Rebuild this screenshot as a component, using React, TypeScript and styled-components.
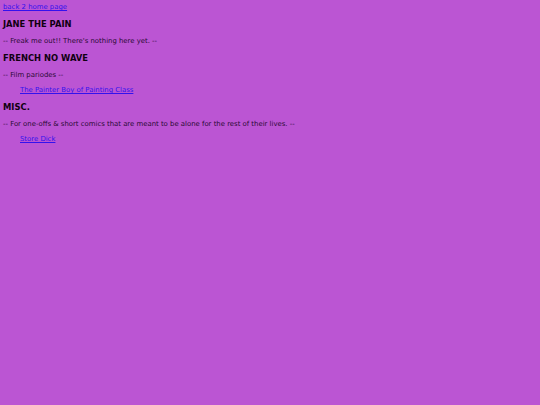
import React from "react";
import styled, { createGlobalStyle } from "styled-components";

const Global = createGlobalStyle`
  html, body { margin: 0; padding: 0; }
  body {
    background: #bb55d3;
    font-family: "DejaVu Sans", Verdana, sans-serif;
    color: #2a0a33;
    min-height: 405px;
  }
`;

const Page = styled.div`
  padding: 2px 3px;
  font-size: 6.9px;
  line-height: 10px;
`;

const Link = styled.a`
  color: #3311ee;
  text-decoration: underline;
`;

const Heading = styled.h2`
  font-size: 8.4px;
  line-height: 10px;
  font-weight: bold;
  color: #110011;
  margin: 7px 0;
`;

const Note = styled.p`
  margin: 7px 0 5px;
`;

const List = styled.ul`
  list-style: none;
  margin: 0;
  padding-left: 17px;
`;

export default function App() {
  return (
    <Page>
      <Global />
      <Link href="#">back 2 home page</Link>
      <Heading>JANE THE PAIN</Heading>
      <Note>-- Freak me out!! There's nothing here yet. --</Note>
      <Heading>FRENCH NO WAVE</Heading>
      <Note>-- Film pariodes --</Note>
      <List>
        <li><Link href="#">The Painter Boy of Painting Class</Link></li>
      </List>
      <Heading>MISC.</Heading>
      <Note>-- For one-offs &amp; short comics that are meant to be alone for the rest of their lives. --</Note>
      <List>
        <li><Link href="#">Store Dick</Link></li>
      </List>
    </Page>
  );
}
